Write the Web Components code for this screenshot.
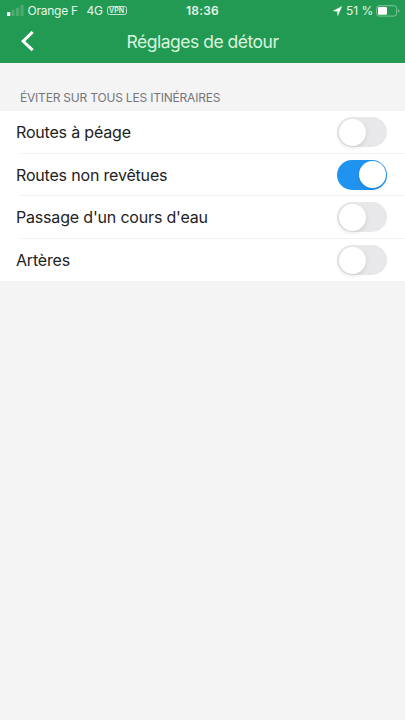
<!DOCTYPE html>
<html lang="fr">
<head>
<meta charset="utf-8">
<title>Réglages de détour</title>
<style>
body{margin:0;background:#f4f4f4;font-family:Inter,"Liberation Sans",sans-serif;-webkit-font-smoothing:antialiased}
</style>
</head>
<body>
<detour-screen></detour-screen>
<script>
const define = (name, html, setup) => customElements.define(name, class extends HTMLElement {
  constructor() {
    super();
    this.attachShadow({mode: 'open'}).innerHTML = html;
  }
  connectedCallback() { if (setup) setup(this); }
});

define('status-bar', `
<style>
:host{display:grid;grid-template-columns:1fr auto 1fr;align-items:center;height:21px;color:#e3f7e9;font-size:12px;line-height:21px;white-space:nowrap}
.left,.right{display:flex;align-items:center}
.left{padding-left:7px}
.right{justify-content:flex-end;padding-right:5px}
.carrier{margin-left:3.5px;letter-spacing:-.25px}
.net{margin-left:8.6px;letter-spacing:-.3px}
.vpn{margin-left:4px;box-sizing:border-box;width:20px;height:9.6px;border:1px solid #c3e8d0;border-radius:2.5px;font-size:7px;font-weight:600;line-height:8px;text-align:center}
.time{font-weight:600;letter-spacing:.2px}
.pct{margin:0 2.6px 0 3.6px}
svg{display:block}
</style>
<div class="left">
<svg width="17" height="11" viewBox="0 0 17 11"><rect x="0" y="7" width="3.3" height="4" rx=".8" fill="#fff"/><g fill="#4cac70"><rect x="4.5" y="5" width="3.2" height="6" rx=".8"/><rect x="9" y="2.7" width="3.2" height="8.3" rx=".8"/><rect x="13.4" y="0" width="3.2" height="11" rx=".8"/></g></svg>
<span class="carrier">Orange F</span><span class="net">4G</span><span class="vpn">VPN</span>
</div>
<span class="time">18:36</span>
<div class="right">
<svg width="9" height="10" viewBox="0 0 9 10"><path d="M8.8.4.2 4.9 4.4 5.2 4.8 9.6z" fill="#fff" stroke="#fff" stroke-width=".4" stroke-linejoin="round"/></svg>
<span class="pct">51 %</span>
<svg width="24" height="12" viewBox="0 0 24 12"><rect x=".6" y=".7" width="20" height="10.4" rx="2.6" fill="none" stroke="#7bc596"/><rect x="2" y="2.1" width="9" height="7.6" rx="1.2" fill="#fff"/><path d="M22 4.2q1.4.4 1.4 1.7T22 7.6z" fill="#7bc596"/></svg>
</div>`);

define('nav-bar', `
<style>
:host{display:grid;grid-template-columns:56px 1fr 56px;align-items:center;height:42px;color:#d8f5df}
svg{display:block;margin-left:20px}
h1{margin:0;font-size:17.5px;font-weight:400;line-height:40px;text-align:center;letter-spacing:-.48px;white-space:nowrap}
</style>
<svg width="16" height="22" viewBox="0 0 16 22"><path d="M12.6 1 3.2 10.3l9.4 8.9" fill="none" stroke="#fff" stroke-width="3"/></svg>
<h1><slot></slot></h1>`);

define('toggle-switch', `
<style>
:host{display:flex;box-sizing:border-box;width:50px;height:30px;padding:1.5px;border-radius:15px;background:#e8e8eb}
:host([on]){justify-content:flex-end;background:#1f93ef}
i{width:27px;height:27px;border-radius:50%;background:#fff;box-shadow:0 2px 4px rgba(0,0,0,.11)}
</style><i></i>`);

define('setting-row', `
<style>
:host{display:flex;align-items:center;justify-content:space-between;box-sizing:border-box;height:42.6px;padding:0 18px 0 16px;color:#222;font-size:16px;line-height:42px;background:#fff linear-gradient(#f1f1f1,#f1f1f1) 20px 100%/100% 1px no-repeat}
:host(:last-of-type){background:#fff}
span{white-space:nowrap;letter-spacing:-.18px}
</style>
<span><slot></slot></span><toggle-switch></toggle-switch>`,
  el => el.shadowRoot.querySelector('toggle-switch').toggleAttribute('on', el.hasAttribute('on')));

define('settings-group', `
<style>
:host{display:block}
h2{margin:0;box-sizing:border-box;height:48px;padding:25px 0 0 20px;font-size:12px;font-weight:400;line-height:20px;color:#75757a;letter-spacing:-.2px;white-space:nowrap}
</style>
<h2><slot name="label"></slot></h2><slot></slot>`);

define('detour-screen', `
<style>
:host{display:flex;flex-direction:column;height:720px;background:#f4f4f4;overflow:hidden}
header{background:#239a53;height:63px}
</style>
<header><status-bar></status-bar><nav-bar>Réglages de détour</nav-bar></header>
<settings-group>
<span slot="label">ÉVITER SUR TOUS LES ITINÉRAIRES</span>
<setting-row>Routes à péage</setting-row>
<setting-row on>Routes non revêtues</setting-row>
<setting-row>Passage d'un cours d'eau</setting-row>
<setting-row>Artères</setting-row>
</settings-group>`);
</script>
</body>
</html>
